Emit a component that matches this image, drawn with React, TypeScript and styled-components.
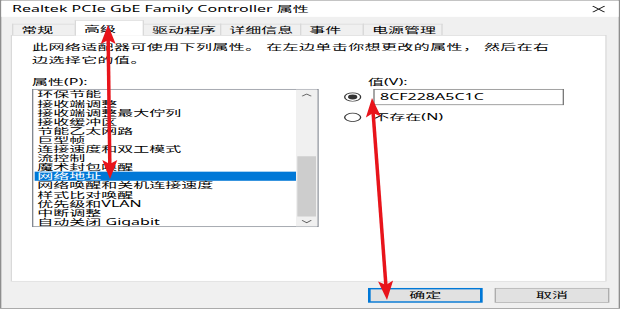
import React from "react";
import styled, { createGlobalStyle } from "styled-components";

const GlobalStyle = createGlobalStyle`
  html, body { margin: 0; padding: 0; background: #f0f0f0; overflow: hidden; }
  * { box-sizing: border-box; }
`;

const Stage = styled.div`
  position: relative;
  width: 620px;
  height: 309px;
  overflow: hidden;
`;

/* The reference is a Windows dialog stretched to 620x309; we lay it out at its
   native size and stretch it the same way. */
const Dialog = styled.div`
  width: 465px;
  height: 441px;
  transform: scale(1.33333, 0.70068);
  transform-origin: 0 0;
  background: #f0f0f0;
  border: 1px solid #8e8e8e;
  display: flex;
  flex-direction: column;
  font-family: "Noto Sans", "Noto Sans CJK SC", sans-serif;
  font-size: 12px;
  color: #000;
`;

const TitleBar = styled.div`
  height: 23px;
  background: #fff;
  display: flex;
  align-items: center;
  justify-content: space-between;
  padding: 0 10px 0 8px;
  line-height: 16px;
`;

const Title = styled.span`
  white-space: nowrap;
`;

const Body = styled.div`
  flex: 1;
  display: flex;
  flex-direction: column;
  padding: 0 7px 0 7px;
`;

const TabStrip = styled.div`
  height: 26px;
  display: flex;
  align-items: flex-end;
  padding-left: 1px;
`;

const Tab = styled.div<{ $active?: boolean; $w: number }>`
  width: ${(p) => p.$w}px;
  height: ${(p) => (p.$active ? 22 : 16)}px;
  margin-right: -1px;
  margin-bottom: ${(p) => (p.$active ? -1 : 0)}px;
  position: relative;
  z-index: ${(p) => (p.$active ? 2 : 1)};
  background: ${(p) => (p.$active ? "#fff" : "#f0f0f0")};
  border: 1px solid #d9d9d9;
  border-bottom: none;
  padding-left: 6px;
  display: flex;
  align-items: center;
  line-height: 14px;
  white-space: nowrap;
`;

const Panel = styled.div`
  height: 352px;
  margin-right: 2px;
  background: #fff;
  border: 1px solid #d9d9d9;
  padding: 7px 15px 0 15px;
  display: flex;
  flex-direction: column;
`;

const Description = styled.p`
  margin: 0;
  line-height: 18.5px;
  letter-spacing: 0.3px;
  white-space: pre;
`;

const Columns = styled.div`
  margin-top: 13px;
  display: grid;
  grid-template-columns: 214.5px 1fr;
  column-gap: 19px;
`;

const Column = styled.div`
  display: flex;
  flex-direction: column;
`;

const FieldLabel = styled.div<{ $indent?: number }>`
  height: 18px;
  line-height: 18px;
  padding-left: ${(p) => p.$indent ?? 0}px;
  margin-bottom: 1px;
  white-space: nowrap;
`;

const ListBox = styled.div`
  height: 197px;
  border: 1px solid #828790;
  display: flex;
`;

const List = styled.div`
  flex: 1;
  padding-left: 0.5px;
  overflow: hidden;
`;

const Item = styled.div<{ $selected?: boolean }>`
  height: 13px;
  line-height: 13px;
  padding-left: 2.5px;
  white-space: nowrap;
  background: ${(p) => (p.$selected ? "#0078d7" : "transparent")};
  color: ${(p) => (p.$selected ? "#fff" : "#000")};
`;

const ScrollBar = styled.div`
  width: 16px;
  background: #f0f0f0;
  display: flex;
  flex-direction: column;
`;

const ScrollButton = styled.div`
  height: 16px;
  display: flex;
  align-items: center;
  justify-content: center;
`;

const Track = styled.div`
  flex: 1;
  display: flex;
  flex-direction: column;
  align-items: center;
`;

const Thumb = styled.div<{ $top: number; $h: number }>`
  margin-top: ${(p) => p.$top}px;
  height: ${(p) => p.$h}px;
  width: 14px;
  background: #cdcdcd;
`;

const OptionRow = styled.div<{ $h: number; $gap?: number }>`
  height: ${(p) => p.$h}px;
  margin-top: ${(p) => p.$gap ?? 0}px;
  display: flex;
  align-items: center;
  gap: 9.5px;
`;

const Radio = styled.span<{ $checked?: boolean }>`
  width: 13px;
  height: 13px;
  border-radius: 50%;
  border: 1px solid #333;
  background: #fff;
  display: flex;
  align-items: center;
  justify-content: center;
  flex: none;
  &::after {
    content: "";
    width: 7px;
    height: 7px;
    border-radius: 50%;
    background: ${(p) => (p.$checked ? "#333" : "transparent")};
  }
`;

const TextInput = styled.div`
  width: 143px;
  height: 23px;
  border: 1px solid #7a7a7a;
  background: #fff;
  padding-left: 4px;
  display: flex;
  align-items: center;
  line-height: 16px;
  white-space: nowrap;
`;

const OptionText = styled.span`
  line-height: 16px;
  white-space: nowrap;
`;

const ButtonRow = styled.div`
  margin-top: 9px;
  display: flex;
  justify-content: flex-end;
  gap: 9px;
`;

const Button = styled.div<{ $default?: boolean }>`
  width: 86px;
  height: 21px;
  background: #e1e1e1;
  border: ${(p) => (p.$default ? "2px solid #0078d7" : "1px solid #adadad")};
  display: flex;
  align-items: center;
  justify-content: center;
  line-height: 14px;
`;

const Overlay = styled.svg`
  position: absolute;
  left: 0;
  top: 0;
  pointer-events: none;
`;

const Chevron = ({ up }: { up?: boolean }) => (
  <svg width="8" height="5" viewBox="0 0 8 5">
    <polyline
      points={up ? "0.5,4.5 4,1 7.5,4.5" : "0.5,0.5 4,4 7.5,0.5"}
      fill="none"
      stroke="#606060"
      strokeWidth="1"
    />
  </svg>
);

const CloseIcon = () => (
  <svg width="10" height="10" viewBox="0 0 10 10">
    <path d="M0.5 0.5 L9.5 9.5 M9.5 0.5 L0.5 9.5" stroke="#111" strokeWidth="1" />
  </svg>
);

type Pt = [number, number];

function head(tip: Pt, from: Pt, len = 19, half = 7.5): string {
  const dx = tip[0] - from[0];
  const dy = tip[1] - from[1];
  const d = Math.hypot(dx, dy);
  const ux = dx / d;
  const uy = dy / d;
  const px = -uy;
  const py = ux;
  const bx = tip[0] - ux * len;
  const by = tip[1] - uy * len;
  const nx = tip[0] - ux * (len - 4);
  const ny = tip[1] - uy * (len - 4);
  return [
    [tip[0], tip[1]],
    [bx + px * half, by + py * half],
    [nx, ny],
    [bx - px * half, by - py * half],
  ]
    .map((p) => p.map((v) => v.toFixed(1)).join(","))
    .join(" ");
}

const DoubleArrow = ({ a, b }: { a: Pt; b: Pt }) => {
  const dx = b[0] - a[0];
  const dy = b[1] - a[1];
  const d = Math.hypot(dx, dy);
  const ux = dx / d;
  const uy = dy / d;
  const s: Pt = [a[0] + ux * 14, a[1] + uy * 14];
  const e: Pt = [b[0] - ux * 14, b[1] - uy * 14];
  return (
    <g fill="#e8141b">
      <line x1={s[0]} y1={s[1]} x2={e[0]} y2={e[1]} stroke="#e8141b" strokeWidth="3.5" />
      <polygon points={head(a, b)} />
      <polygon points={head(b, a)} />
    </g>
  );
};

const tabs = [
  { label: "常规", w: 48 },
  { label: "高级", w: 52, active: true },
  { label: "驱动程序", w: 59 },
  { label: "详细信息", w: 61 },
  { label: "事件", w: 48 },
  { label: "电源管理", w: 60 },
];

const items = [
  "环保节能",
  "接收端调整",
  "接收端调整最大佇列",
  "接收缓冲区",
  "节能乙太网路",
  "巨型帧",
  "连接速度和双工模式",
  "流控制",
  "魔术封包唤醒",
  "网络地址",
  "网络唤醒和关机连接速度",
  "样式比对唤醒",
  "优先级和VLAN",
  "中断调整",
  "自动关闭 Gigabit",
];

export default function App() {
  return (
    <Stage>
      <GlobalStyle />
      <Dialog>
        <TitleBar>
          <Title>Realtek PCIe GbE Family Controller 属性</Title>
          <CloseIcon />
        </TitleBar>
        <Body>
          <TabStrip>
            {tabs.map((t) => (
              <Tab key={t.label} $w={t.w} $active={t.active}>
                {t.label}
              </Tab>
            ))}
          </TabStrip>
          <Panel>
            <Description>
              {"此网络适配器可使用下列属性。 在左边单击你想更改的属性， 然后在右\n边选择它的值。"}
            </Description>
            <Columns>
              <Column>
                <FieldLabel>属性(P):</FieldLabel>
                <ListBox>
                  <List>
                    {items.map((it) => (
                      <Item key={it} $selected={it === "网络地址"}>
                        {it}
                      </Item>
                    ))}
                  </List>
                  <ScrollBar>
                    <ScrollButton>
                      <Chevron up />
                    </ScrollButton>
                    <Track>
                      <Thumb $top={81} $h={86} />
                    </Track>
                    <ScrollButton>
                      <Chevron />
                    </ScrollButton>
                  </ScrollBar>
                </ListBox>
              </Column>
              <Column>
                <FieldLabel $indent={18.5}>值(V):</FieldLabel>
                <OptionRow $h={23}>
                  <Radio $checked />
                  <TextInput>8CF228A5C1C</TextInput>
                </OptionRow>
                <OptionRow $h={16} $gap={9}>
                  <Radio />
                  <OptionText>不存在(N)</OptionText>
                </OptionRow>
              </Column>
            </Columns>
          </Panel>
          <ButtonRow>
            <Button $default>确定</Button>
            <Button>取消</Button>
          </ButtonRow>
        </Body>
      </Dialog>
      <Overlay width="620" height="309" viewBox="0 0 620 309">
        <DoubleArrow a={[108, 25]} b={[110, 179]} />
        <DoubleArrow a={[372, 98]} b={[387, 300]} />
      </Overlay>
    </Stage>
  );
}
